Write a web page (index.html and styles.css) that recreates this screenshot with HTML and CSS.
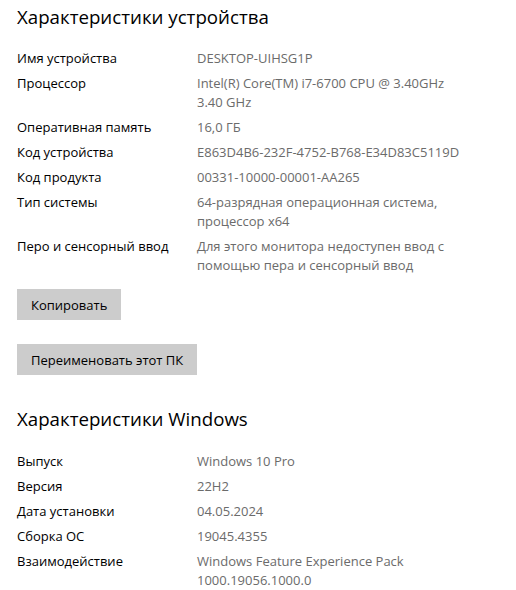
FILE: index.html
```html
<!DOCTYPE html>
<html>
<head>
  <meta charset="UTF-8">
  <title>О системе</title>
  <link rel="stylesheet" href="styles.css">
</head>
<body>
  <div class="page">
    <h2>Характеристики устройства</h2>
    <div class="specs">
      <div class="row"><span class="label">Имя устройства</span><span class="value">DESKTOP-UIHSG1P</span></div>
      <div class="row"><span class="label">Процессор</span><span class="value">Intel(R) Core(TM) i7-6700 CPU @ 3.40GHz<br>3.40 GHz</span></div>
      <div class="row"><span class="label">Оперативная память</span><span class="value">16,0 ГБ</span></div>
      <div class="row"><span class="label">Код устройства</span><span class="value">E863D4B6-232F-4752-B768-E34D83C5119D</span></div>
      <div class="row"><span class="label">Код продукта</span><span class="value">00331-10000-00001-AA265</span></div>
      <div class="row"><span class="label">Тип системы</span><span class="value">64-разрядная операционная система,<br>процессор x64</span></div>
      <div class="row"><span class="label">Перо и сенсорный ввод</span><span class="value">Для этого монитора недоступен ввод с<br>помощью пера и сенсорный ввод</span></div>
    </div>

    <button type="button" class="btn">Копировать</button>
    <button type="button" class="btn">Переименовать этот ПК</button>

    <h2 class="second">Характеристики Windows</h2>
    <div class="specs">
      <div class="row"><span class="label">Выпуск</span><span class="value">Windows 10 Pro</span></div>
      <div class="row"><span class="label">Версия</span><span class="value">22H2</span></div>
      <div class="row"><span class="label">Дата установки</span><span class="value">04.05.2024</span></div>
      <div class="row"><span class="label">Сборка ОС</span><span class="value">19045.4355</span></div>
      <div class="row"><span class="label">Взаимодействие</span><span class="value">Windows Feature Experience Pack<br>1000.19056.1000.0</span></div>
    </div>
  </div>
</body>
</html>
```

FILE: styles.css
```css
/* Reset default styles */
body, html {
  margin: 0;
  padding: 0;
  background-color: #fff;
  font-family: "Open Sans", "Noto Sans", sans-serif;
  color: #000;
}

/* Page wrapper */
.page {
  padding: 0 0 0 17px;
}

/* Section titles */
h2 {
  margin: 0;
  padding-top: 3px;
  font-size: 18.7px;
  font-weight: 400;
  line-height: 28px;
}

h2.second {
  margin-top: 27px;
}

/* Spec rows */
.specs {
  margin-top: 18px;
  font-size: 13px;
  line-height: 19px;
}

.second + .specs {
  margin-top: 19px;
}

.row {
  display: flex;
  margin-bottom: 6px;
}

.label {
  width: 180px;
  flex-shrink: 0;
}

.value {
  color: #6b6b6b;
  white-space: nowrap;
}

/* Buttons */
.btn {
  display: block;
  height: 31px;
  padding: 0 14px;
  margin-top: 24px;
  border: none;
  background-color: #cccccc;
  font-family: inherit;
  font-size: 13px;
  color: #000;
}

.specs + .btn {
  margin-top: 14px;
}
```
